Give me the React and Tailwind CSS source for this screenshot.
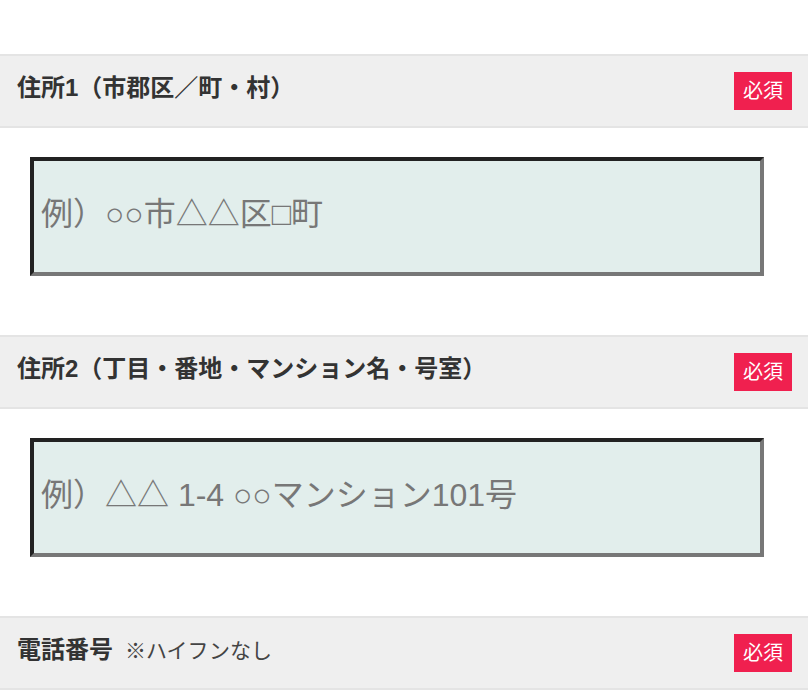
import React from "react";

const FONT = { fontFamily: '"Liberation Sans", Arial, "Noto Sans CJK JP", sans-serif' };

function Badge() {
  return (
    <span className="flex h-[38px] w-[58px] shrink-0 items-center justify-center bg-[#f0204f] text-[20px] leading-none text-white">
      必須
    </span>
  );
}

function Header({ children }) {
  return (
    <div className="flex h-[74px] items-center justify-between border-y-2 border-[#e4e4e4] bg-[#efefef] pl-[17px] pr-[16px]">
      <div className="mb-[7px] flex items-baseline leading-none text-[#333]">{children}</div>
      <Badge />
    </div>
  );
}

function Field({ placeholder }) {
  return (
    <div className="pb-[59px] pl-[30px] pr-[44px] pt-[29px]">
      <input
        type="text"
        placeholder={placeholder}
        className="block h-[119px] w-full border-4 border-b-[#777777] border-l-[#222222] border-r-[#777777] border-t-[#222222] bg-[#e2eeec] px-[7px] pb-[5px] text-[32px] text-[#333] outline-none placeholder:text-[#777777]"
        style={FONT}
      />
    </div>
  );
}

export default function App() {
  return (
    <div className="h-[698px] w-[808px] overflow-hidden bg-white pt-[54px]" style={FONT}>
      <section>
        <Header>
          <span className="text-[24px] font-bold">住所1（市郡区／町・村）</span>
        </Header>
        <Field placeholder="例）○○市△△区□町" />
      </section>
      <section>
        <Header>
          <span className="text-[24px] font-bold">住所2（丁目・番地・マンション名・号室）</span>
        </Header>
        <Field placeholder="例）△△ 1-4 ○○マンション101号" />
      </section>
      <section>
        <Header>
          <span className="text-[24px] font-bold">電話番号</span>
          <span className="ml-[12px] text-[21px] text-[#444]">※ハイフンなし</span>
        </Header>
      </section>
    </div>
  );
}
